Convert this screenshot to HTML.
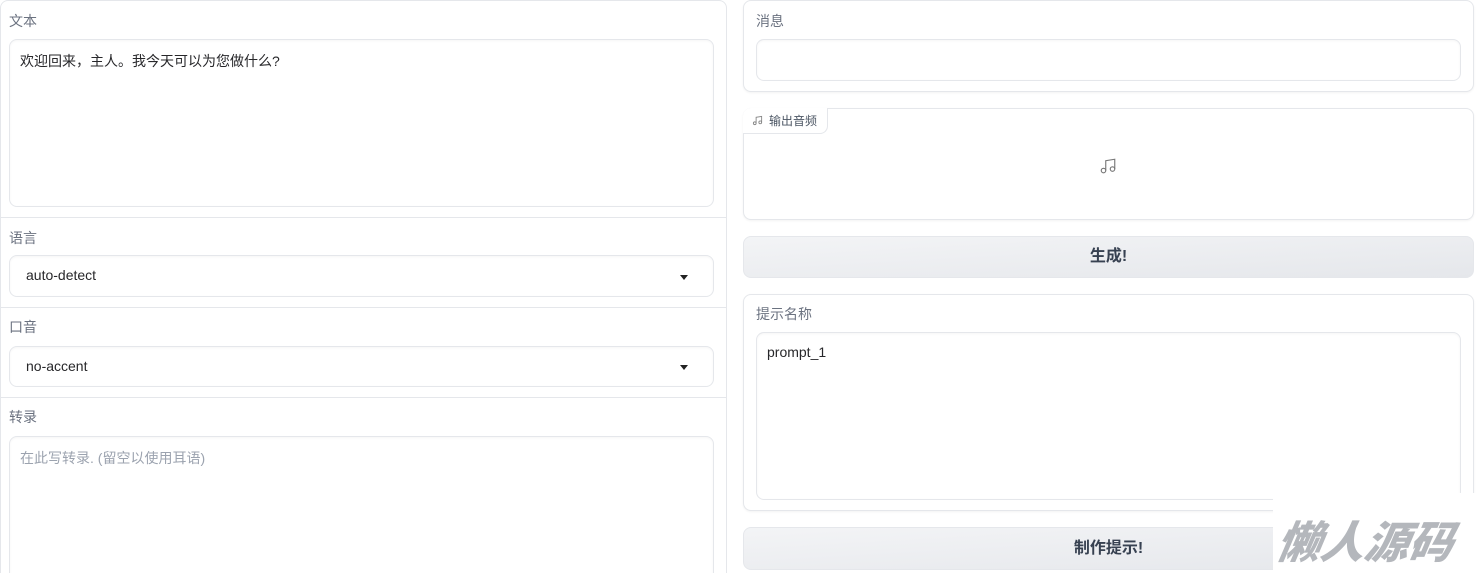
<!DOCTYPE html>
<html><head><meta charset="utf-8"><style>
*{box-sizing:border-box;margin:0;padding:0}
html{width:1476px;height:573px;overflow:hidden}
body{width:1476px;height:573px;overflow:hidden;background:#fff;font-family:"Liberation Sans","Noto Sans CJK SC",sans-serif;font-size:14px;color:#27272a;position:relative}
.abs{position:absolute}
.lbl{position:absolute;font-size:14px;color:#6b7280}
.box{position:absolute;border:1px solid #e5e7eb;border-radius:8px;background:#fff;box-shadow:0 1px 2px rgba(0,0,0,.05)}
.in{position:absolute;border:1px solid #e5e7eb;border-radius:8px;background:#fff;box-shadow:inset 0 1px 2px rgba(0,0,0,.04)}
.hr{position:absolute;left:0;width:726px;height:1px;background:#e5e7eb}
.btn{position:absolute;border:1px solid #e5e7eb;border-radius:8px;background:linear-gradient(to bottom right,#f3f4f6,#e5e7eb);font-weight:bold;font-size:16px;text-align:center;color:#374151}
.arrow{position:absolute;width:0;height:0;border-left:4px solid transparent;border-right:4px solid transparent;border-top:5px solid #222}
</style></head><body>
<div class="abs" style="left:0;top:0;width:727px;height:600px;border:1px solid #e5e7eb;border-radius:8px"></div>
<div class="lbl" style="left:9px;top:11px">文本</div>
<div class="in" style="left:9px;top:39px;width:705px;height:168px"><div style="position:absolute;left:10px;top:11px">欢迎回来，主人。我今天可以为您做什么?</div></div>
<div class="hr" style="top:217px"></div>
<div class="lbl" style="left:9px;top:228px">语言</div>
<div class="in" style="left:9px;top:255px;width:705px;height:42px"><div style="position:absolute;left:16px;top:11px">auto-detect</div><div class="arrow" style="left:670px;top:19px"></div></div>
<div class="hr" style="top:307px"></div>
<div class="lbl" style="left:9px;top:317px">口音</div>
<div class="in" style="left:9px;top:346px;width:705px;height:41px"><div style="position:absolute;left:16px;top:11px">no-accent</div><div class="arrow" style="left:670px;top:18px"></div></div>
<div class="hr" style="top:397px"></div>
<div class="lbl" style="left:9px;top:407px">转录</div>
<div class="in" style="left:9px;top:436px;width:705px;height:160px"><div style="position:absolute;left:10px;top:11px;color:#9ca3af">在此写转录. (留空以使用耳语)</div></div>

<div class="box" style="left:743px;top:0;width:731px;height:92px"></div>
<div class="lbl" style="left:756px;top:11px">消息</div>
<div class="in" style="left:756px;top:39px;width:705px;height:42px"></div>

<div class="box" style="left:743px;top:108px;width:731px;height:112px"></div>
<div class="abs" style="left:743px;top:108px;width:85px;height:26px;border-right:1px solid #e5e7eb;border-bottom:1px solid #e5e7eb;border-radius:8px 0 8px 0;background:#fff;font-size:12px;color:#4b5563;padding:4px 0 0 26px">输出音频</div>
<svg class="abs" style="left:752px;top:115px" width="11" height="11" viewBox="0 0 24 24" fill="none" stroke="#888" stroke-width="2"><path d="M9 18V5l12-2v13"/><circle cx="6" cy="18" r="3"/><circle cx="18" cy="16" r="3"/></svg>
<svg class="abs" style="left:1099px;top:157px" width="18" height="18" viewBox="0 0 24 24" fill="none" stroke="#777" stroke-width="1.5"><path d="M9 18V5l12-2v13"/><circle cx="6" cy="18" r="3"/><circle cx="18" cy="16" r="3"/></svg>

<div class="btn" style="left:743px;top:236px;width:731px;height:42px;line-height:40px">生成!</div>

<div class="box" style="left:743px;top:294px;width:731px;height:217px"></div>
<div class="lbl" style="left:756px;top:304px">提示名称</div>
<div class="in" style="left:756px;top:332px;width:705px;height:168px"><div style="position:absolute;left:10px;top:11px">prompt_1</div></div>

<div class="btn" style="left:743px;top:527px;width:731px;height:43px;line-height:41px">制作提示!</div>

<div class="abs" style="left:1273px;top:493px;width:203px;height:80px;background:#fff"></div>
<div class="abs" style="left:1278px;top:511px;font-size:44px;font-weight:900;font-style:italic;color:#b4b7bc;line-height:56px;font-family:'Noto Sans CJK SC',sans-serif;transform:skewX(-10deg)">懒人源码</div>
</body></html>
